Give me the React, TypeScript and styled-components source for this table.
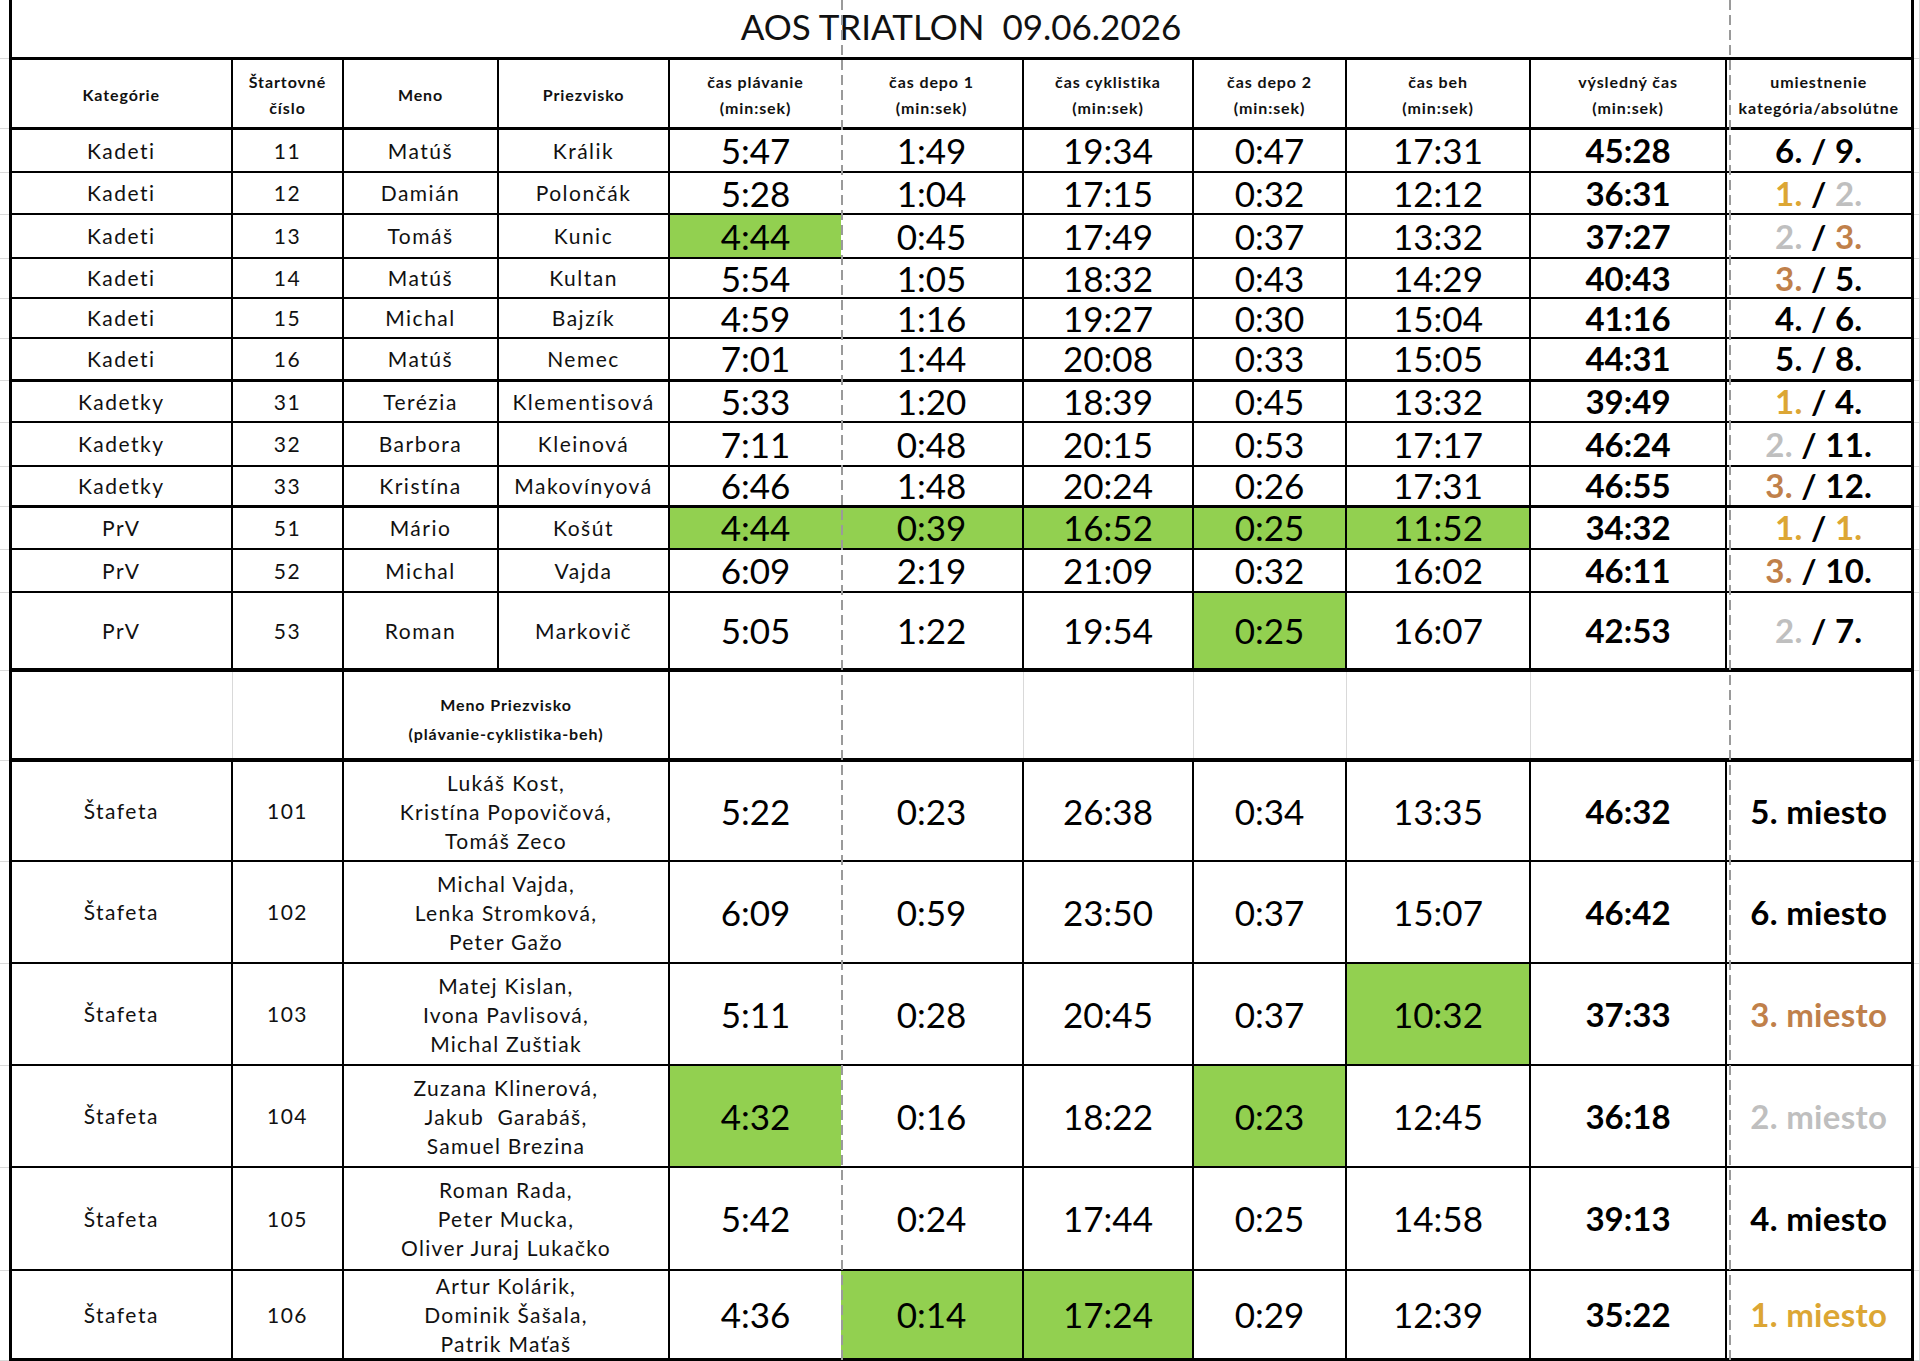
import React from "react";
import styled, { createGlobalStyle } from "styled-components";

const GlobalStyle = createGlobalStyle`
  html, body { margin: 0; padding: 0; background: #fff; overflow: hidden; }
  body { font-family: Lato, "Noto Sans", "Liberation Sans", sans-serif; color: #000; }
`;

type Edge = "thin" | "med" | "thick" | "outer" | "grid" | "none";
type Medal = "gold" | "silver" | "bronze" | "plain";

const edge = (e: Edge | undefined) => {
  switch (e) {
    case "thin":
      return "2px solid #000";
    case "med":
      return "3px solid #000";
    case "thick":
      return "4px solid #000";
    case "outer":
      return "3px solid #000";
    case "grid":
      return "1px solid #d9d9d9";
    default:
      return "none";
  }
};

const medalColor: Record<Medal, string> = {
  gold: "#dca634",
  silver: "#bfbfbf",
  bronze: "#c0804a",
  plain: "#000",
};

const COLS = [10, 222, 111, 155, 171, 172, 182, 170, 153, 184, 196, 186, 8];

const Sheet = styled.div`
  position: relative;
  width: 1920px;
  height: 1361px;
  overflow: hidden;
  background: #fff;
`;

const Grid = styled.table`
  border-collapse: collapse;
  table-layout: fixed;
  width: 1920px;
`;

const Col = styled.col<{ $w: number }>`
  width: ${(p) => p.$w}px;
`;

const Row = styled.tr<{ $h: number }>`
  height: ${(p) => p.$h}px;
`;

const Cell = styled.td<{ $l?: Edge; $r?: Edge; $b?: Edge; $bg?: string }>`
  padding: 0;
  text-align: center;
  vertical-align: middle;
  line-height: 1;
  border-left: ${(p) => edge(p.$l)};
  border-right: ${(p) => edge(p.$r)};
  border-bottom: ${(p) => edge(p.$b)};
  border-top: none;
  background: ${(p) => p.$bg ?? "transparent"};
  white-space: nowrap;
`;

const Gutter = styled.td<{ $edge?: boolean }>`
  padding: 0;
  border: none;
  border-bottom: 1px solid #d9d9d9;
  ${(p) => (p.$edge ? "box-shadow: inset -1px 0 0 #d9d9d9;" : "")}
`;

const TitleCell = styled(Cell)`
  font-size: 35px;
  font-weight: 400;
  color: #111;
  padding-bottom: 3px;
  white-space: pre;
`;

const HeadCell = styled(Cell)`
  font-size: 16px;
  font-weight: 700;
  letter-spacing: 0.9px;
  line-height: 26px;
  padding-top: 4px;
  color: #111;
`;

const HeadLine = styled.span`
  display: block;
`;

const SubHeadCell = styled(HeadCell)`
  line-height: 29px;
  padding-top: 8px;
`;

const TextCell = styled(Cell)`
  font-size: 21px;
  letter-spacing: 1.5px;
  line-height: 1.1;
  color: #111;
`;

const TimeCell = styled(Cell)`
  font-size: 35px;
  font-weight: 400;
  color: #000;
`;

const TotalCell = styled(Cell)`
  font-size: 33px;
  font-weight: 700;
  color: #000;
`;

const PlaceCell = styled(TotalCell)`
  letter-spacing: 0.3px;
`;

const MedalText = styled.span<{ $m: Medal }>`
  color: ${(p) => medalColor[p.$m]};
`;

const RelayNames = styled(Cell)`
  font-size: 21px;
  letter-spacing: 1.3px;
  line-height: 29px;
  color: #111;
`;

const NameLine = styled.span`
  display: block;
  white-space: pre;
`;

const PageBreak = styled.div<{ $x: number }>`
  position: absolute;
  top: 0;
  bottom: 0;
  left: ${(p) => p.$x}px;
  width: 2px;
  background: repeating-linear-gradient(
    to bottom,
    #9a9a9a 0 10px,
    transparent 10px 15px
  );
  pointer-events: none;
`;

const GREEN = "#92d050";

type Individual = {
  cat: string;
  no: string;
  first: string;
  last: string;
  times: string[];
  green: number[];
  total: string;
  place: [string, Medal, string, Medal];
  h: number;
  bottom: Edge;
};

const individuals: Individual[] = [
  { cat: "Kadeti", no: "11", first: "Matúš", last: "Králik", times: ["5:47", "1:49", "19:34", "0:47", "17:31"], green: [], total: "45:28", place: ["6.", "plain", "9.", "plain"], h: 44, bottom: "thin" },
  { cat: "Kadeti", no: "12", first: "Damián", last: "Polončák", times: ["5:28", "1:04", "17:15", "0:32", "12:12"], green: [], total: "36:31", place: ["1.", "gold", "2.", "silver"], h: 42, bottom: "thin" },
  { cat: "Kadeti", no: "13", first: "Tomáš", last: "Kunic", times: ["4:44", "0:45", "17:49", "0:37", "13:32"], green: [0], total: "37:27", place: ["2.", "silver", "3.", "bronze"], h: 44, bottom: "thin" },
  { cat: "Kadeti", no: "14", first: "Matúš", last: "Kultan", times: ["5:54", "1:05", "18:32", "0:43", "14:29"], green: [], total: "40:43", place: ["3.", "bronze", "5.", "plain"], h: 40, bottom: "thin" },
  { cat: "Kadeti", no: "15", first: "Michal", last: "Bajzík", times: ["4:59", "1:16", "19:27", "0:30", "15:04"], green: [], total: "41:16", place: ["4.", "plain", "6.", "plain"], h: 40, bottom: "thin" },
  { cat: "Kadeti", no: "16", first: "Matúš", last: "Nemec", times: ["7:01", "1:44", "20:08", "0:33", "15:05"], green: [], total: "44:31", place: ["5.", "plain", "8.", "plain"], h: 42, bottom: "med" },
  { cat: "Kadetky", no: "31", first: "Terézia", last: "Klementisová", times: ["5:33", "1:20", "18:39", "0:45", "13:32"], green: [], total: "39:49", place: ["1.", "gold", "4.", "plain"], h: 42, bottom: "thin" },
  { cat: "Kadetky", no: "32", first: "Barbora", last: "Kleinová", times: ["7:11", "0:48", "20:15", "0:53", "17:17"], green: [], total: "46:24", place: ["2.", "silver", "11.", "plain"], h: 44, bottom: "thin" },
  { cat: "Kadetky", no: "33", first: "Kristína", last: "Makovínyová", times: ["6:46", "1:48", "20:24", "0:26", "17:31"], green: [], total: "46:55", place: ["3.", "bronze", "12.", "plain"], h: 40, bottom: "med" },
  { cat: "PrV", no: "51", first: "Mário", last: "Košút", times: ["4:44", "0:39", "16:52", "0:25", "11:52"], green: [0, 1, 2, 3, 4], total: "34:32", place: ["1.", "gold", "1.", "gold"], h: 43, bottom: "thin" },
  { cat: "PrV", no: "52", first: "Michal", last: "Vajda", times: ["6:09", "2:19", "21:09", "0:32", "16:02"], green: [], total: "46:11", place: ["3.", "bronze", "10.", "plain"], h: 43, bottom: "thin" },
  { cat: "PrV", no: "53", first: "Roman", last: "Markovič", times: ["5:05", "1:22", "19:54", "0:25", "16:07"], green: [3], total: "42:53", place: ["2.", "silver", "7.", "plain"], h: 78, bottom: "thick" },
];

type Relay = {
  no: string;
  names: string[];
  times: string[];
  green: number[];
  total: string;
  place: string;
  medal: Medal;
  h: number;
  bottom: Edge;
};

const relays: Relay[] = [
  { no: "101", names: ["Lukáš Kost,", "Kristína Popovičová,", "Tomáš Zeco"], times: ["5:22", "0:23", "26:38", "0:34", "13:35"], green: [], total: "46:32", place: "5. miesto", medal: "plain", h: 101, bottom: "thin" },
  { no: "102", names: ["Michal Vajda,", "Lenka Stromková,", "Peter Gažo"], times: ["6:09", "0:59", "23:50", "0:37", "15:07"], green: [], total: "46:42", place: "6. miesto", medal: "plain", h: 102, bottom: "thin" },
  { no: "103", names: ["Matej Kislan,", "Ivona Pavlisová,", "Michal Zuštiak"], times: ["5:11", "0:28", "20:45", "0:37", "10:32"], green: [4], total: "37:33", place: "3. miesto", medal: "bronze", h: 102, bottom: "thin" },
  { no: "104", names: ["Zuzana Klinerová,", "Jakub  Garabáš,", "Samuel Brezina"], times: ["4:32", "0:16", "18:22", "0:23", "12:45"], green: [0, 3], total: "36:18", place: "2. miesto", medal: "silver", h: 102, bottom: "thin" },
  { no: "105", names: ["Roman Rada,", "Peter Mucka,", "Oliver Juraj Lukačko"], times: ["5:42", "0:24", "17:44", "0:25", "14:58"], green: [], total: "39:13", place: "4. miesto", medal: "plain", h: 103, bottom: "thin" },
  { no: "106", names: ["Artur Kolárik,", "Dominik Šašala,", "Patrik Maťaš"], times: ["4:36", "0:14", "17:24", "0:29", "12:39"], green: [1, 2], total: "35:22", place: "1. miesto", medal: "gold", h: 86, bottom: "thick" },
];

const headers: string[][] = [
  ["Kategórie"],
  ["Štartovné", "číslo"],
  ["Meno"],
  ["Priezvisko"],
  ["čas plávanie", "(min:sek)"],
  ["čas depo 1", "(min:sek)"],
  ["čas cyklistika", "(min:sek)"],
  ["čas depo 2", "(min:sek)"],
  ["čas beh", "(min:sek)"],
  ["výsledný čas", "(min:sek)"],
  ["umiestnenie", "kategória/absolútne"],
];

// right edge of data column c (0..10) in regular rows
const rightOf = (c: number): Edge => (c === 4 ? "none" : c === 10 ? "outer" : "thin");
const leftOf = (c: number): Edge | undefined => (c === 0 ? "outer" : undefined);

const TimeCells: React.FC<{ times: string[]; green: number[]; bottom: Edge }> = ({ times, green, bottom }) => (
  <>
    {times.map((t, i) => (
      <TimeCell key={i} $r={rightOf(4 + i)} $b={bottom} $bg={green.includes(i) ? GREEN : undefined}>
        {t}
      </TimeCell>
    ))}
  </>
);

export default function App() {
  return (
    <Sheet>
      <GlobalStyle />
      <Grid>
        <colgroup>
          {COLS.map((w, i) => (
            <Col key={i} $w={w} />
          ))}
        </colgroup>
        <tbody>
          <Row $h={58}>
            <Gutter />
            <TitleCell colSpan={11} $l="outer" $r="outer" $b="med">
              {"AOS TRIATLON  09.06.2026"}
            </TitleCell>
            <Gutter $edge />
          </Row>

          <Row $h={70}>
            <Gutter />
            {headers.map((lines, c) => (
              <HeadCell key={c} $l={leftOf(c)} $r={rightOf(c)} $b="med">
                {lines.map((l) => (
                  <HeadLine key={l}>{l}</HeadLine>
                ))}
              </HeadCell>
            ))}
            <Gutter $edge />
          </Row>

          {individuals.map((r) => (
            <Row key={r.no} $h={r.h}>
              <Gutter />
              <TextCell $l="outer" $r="thin" $b={r.bottom}>{r.cat}</TextCell>
              <TextCell $r="thin" $b={r.bottom}>{r.no}</TextCell>
              <TextCell $r="thin" $b={r.bottom}>{r.first}</TextCell>
              <TextCell $r="thin" $b={r.bottom}>{r.last}</TextCell>
              <TimeCells times={r.times} green={r.green} bottom={r.bottom} />
              <TotalCell $r="thin" $b={r.bottom}>{r.total}</TotalCell>
              <PlaceCell $r="outer" $b={r.bottom}>
                <MedalText $m={r.place[1]}>{r.place[0]}</MedalText>
                {" / "}
                <MedalText $m={r.place[3]}>{r.place[2]}</MedalText>
              </PlaceCell>
              <Gutter $edge />
            </Row>
          ))}

          <Row $h={90}>
            <Gutter />
            <Cell $l="outer" $r="grid" $b="thick" />
            <Cell $r="thin" $b="thick" />
            <SubHeadCell colSpan={2} $r="thin" $b="thick">
              <HeadLine>Meno Priezvisko</HeadLine>
              <HeadLine>(plávanie-cyklistika-beh)</HeadLine>
            </SubHeadCell>
            <Cell $r="none" $b="thick" />
            <Cell $r="grid" $b="thick" />
            <Cell $r="grid" $b="thick" />
            <Cell $r="grid" $b="thick" />
            <Cell $r="grid" $b="thick" />
            <Cell $r="none" $b="thick" />
            <Cell $r="outer" $b="thick" />
            <Gutter $edge />
          </Row>

          {relays.map((r) => (
            <Row key={r.no} $h={r.h}>
              <Gutter />
              <TextCell $l="outer" $r="thin" $b={r.bottom}>Štafeta</TextCell>
              <TextCell $r="thin" $b={r.bottom}>{r.no}</TextCell>
              <RelayNames colSpan={2} $r="thin" $b={r.bottom}>
                {r.names.map((n) => (
                  <NameLine key={n}>{n}</NameLine>
                ))}
              </RelayNames>
              <TimeCells times={r.times} green={r.green} bottom={r.bottom} />
              <TotalCell $r="thin" $b={r.bottom}>{r.total}</TotalCell>
              <PlaceCell $r="outer" $b={r.bottom}>
                <MedalText $m={r.medal}>{r.place}</MedalText>
              </PlaceCell>
              <Gutter $edge />
            </Row>
          ))}
        </tbody>
      </Grid>
      <PageBreak $x={841} />
      <PageBreak $x={1729} />
    </Sheet>
  );
}
